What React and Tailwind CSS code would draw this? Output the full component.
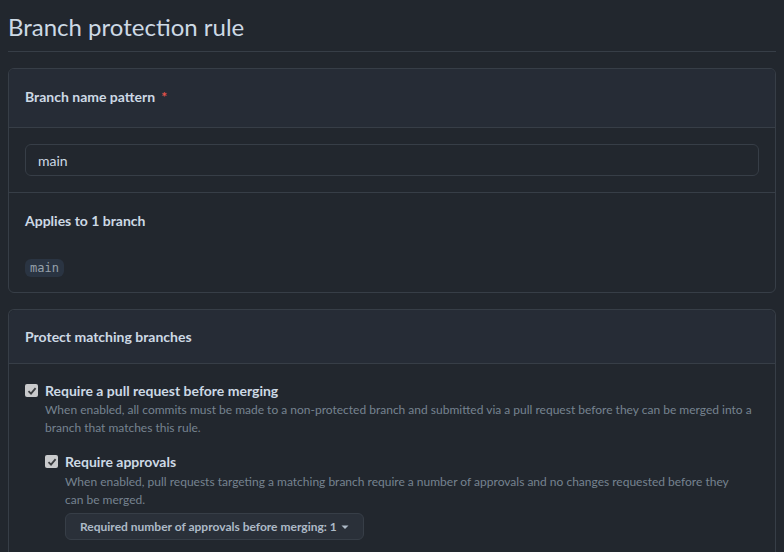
import React from "react";

function Check() {
  return (
    <span className="mt-[1px] flex h-[13px] w-[13px] shrink-0 items-center justify-center rounded-[2px] bg-[#c9cacc]">
      <svg width="10" height="10" viewBox="0 0 10 10">
        <path d="M1.5 5.2 L4 7.6 L8.6 2.2" fill="none" stroke="#3b3d40" strokeWidth="1.8" />
      </svg>
    </span>
  );
}

export default function App() {
  return (
    <div className="min-h-[552px] bg-[#22272e] px-2 text-[#adbac7]" style={{ fontFamily: 'Lato, "Segoe UI", sans-serif' }}>
      <div className="flex h-[52px] items-center border-b border-[#373e47] pt-[2px]">
        <h1 className="text-[24px] font-normal leading-none text-[#cdd9e5]">Branch protection rule</h1>
      </div>

      <div className="mt-4 overflow-hidden rounded-md border border-[#373e47]">
        <div className="flex h-[59px] items-center border-b border-[#373e47] bg-[#262c36] px-4 pb-[3px]">
          <span className="text-[14px] font-bold text-[#cdd9e5]">Branch name pattern</span>
          <span className="ml-1.5 text-[14px] font-bold text-[#e5534b]">*</span>
        </div>
        <div className="border-b border-[#373e47] px-4 pt-4 pb-[16px]">
          <div className="flex h-[32px] items-center rounded-md border border-[#373e47] bg-[#22272e] px-3 text-[14px] text-[#cdd9e5]">main</div>
        </div>
        <div className="px-4 pt-[18px] pb-[15px]">
          <div className="text-[14px] font-bold leading-5 text-[#cdd9e5]">Applies to 1 branch</div>
          <div className="mt-[28px] flex">
            <span className="inline-block rounded-md bg-[#2a3442] px-[5px] py-[1px] text-[12px] leading-4 text-[#96a0aa]" style={{ fontFamily: '"DejaVu Sans Mono", monospace' }}>main</span>
          </div>
        </div>
      </div>

      <div className="mt-4 rounded-t-md border border-b-0 border-[#373e47]">
        <div className="flex h-[54px] items-center rounded-t-md border-b border-[#373e47] bg-[#262c36] px-4">
          <span className="text-[14px] font-bold text-[#cdd9e5]">Protect matching branches</span>
        </div>
        <div className="px-4 pt-[19px] pb-4">
          <div className="flex gap-[7px]">
            <Check />
            <div>
              <div className="text-[14px] font-bold leading-[15px] text-[#cdd9e5]">Require a pull request before merging</div>
              <p className="mt-[3px] text-[12px] leading-[18px] text-[#768390]">
                When enabled, all commits must be made to a non-protected branch and submitted via a pull request before they can be merged into a branch that matches this rule.
              </p>
              <div className="mt-[17px] flex gap-[7px]">
                <Check />
                <div>
                  <div className="text-[14px] font-bold leading-[15px] text-[#cdd9e5]">Require approvals</div>
                  <p className="mt-[4px] pr-3 text-[12px] leading-[18px] text-[#768390]">
                    When enabled, pull requests targeting a matching branch require a number of approvals and no changes requested before they can be merged.
                  </p>
                  <button className="mt-[4px] flex h-[27px] items-center gap-1 rounded-md border border-[#373e47] bg-[#2a3039] px-[14px] text-[12px] font-bold text-[#adbac7]">
                    Required number of approvals before merging: 1
                    <svg width="8" height="8" viewBox="0 0 8 8"><path d="M0.5 2.5 L4 6 L7.5 2.5 Z" fill="#adbac7" /></svg>
                  </button>
                </div>
              </div>
            </div>
          </div>
        </div>
      </div>
    </div>
  );
}
